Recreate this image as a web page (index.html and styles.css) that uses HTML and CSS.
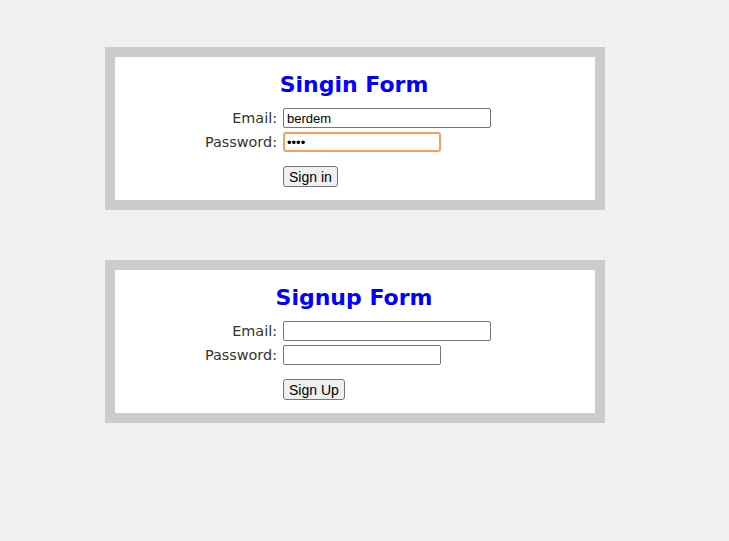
FILE: index.html
```html
<!DOCTYPE html>
<html>
<head>
<meta charset="utf-8">
<title>Forms</title>
<link rel="stylesheet" href="styles.css">
</head>
<body>
<div class="page">
  <section class="card">
    <h2 class="title">Singin Form</h2>
    <form class="form">
      <label class="label" for="e1">Email:</label>
      <input class="field field-wide" id="e1" type="text" value="berdem">
      <label class="label" for="p1">Password:</label>
      <input class="field field-short focused" id="p1" type="password" value="1234">
      <span></span>
      <div class="actions"><button class="btn" type="button">Sign in</button></div>
    </form>
  </section>
  <section class="card">
    <h2 class="title">Signup Form</h2>
    <form class="form">
      <label class="label" for="e2">Email:</label>
      <input class="field field-wide" id="e2" type="text">
      <label class="label" for="p2">Password:</label>
      <input class="field field-short" id="p2" type="password">
      <span></span>
      <div class="actions"><button class="btn" type="button">Sign Up</button></div>
    </form>
  </section>
</div>
</body>
</html>
```
FILE: styles.css
```css
html, body {
  margin: 0;
  padding: 0;
  background: #f0f0f0;
}
.page {
  display: flex;
  flex-direction: column;
  gap: 50px;
  padding: 47px 0 0 105px;
}
.card {
  width: 480px;
  background: #fff;
  border: 10px solid #cccccc;
  padding: 14px 0 13px 0;
}
.title {
  margin: 0;
  text-align: center;
  font-family: "DejaVu Sans", sans-serif;
  font-weight: bold;
  font-size: 22px;
  line-height: 28px;
  color: #0000ff;
  padding-right: 2px;
}
.form {
  margin-top: 9px;
  display: grid;
  grid-template-columns: 162px auto;
  column-gap: 6px;
  row-gap: 4px;
  align-items: center;
}
.label {
  text-align: right;
  font-family: "DejaVu Sans", sans-serif;
  font-size: 14.4px;
  color: #333;
  line-height: 20px;
}
.field {
  box-sizing: border-box;
  height: 20px;
  margin: 0;
  border: 1px solid #767676;
  border-radius: 2px;
  padding: 0 3px;
  font-family: "Liberation Sans", Arial, sans-serif;
  font-size: 13px;
  color: #000;
  background: #fff;
  outline: none;
}
.field-wide { width: 208px; }
.field-short { width: 158px; }
.focused {
  border: 2px solid #f5a05a;
  border-radius: 3px;
  padding: 0 2px;
}
.actions {
  padding-top: 10px;
}
.btn {
  box-sizing: border-box;
  height: 21px;
  margin: 0;
  padding: 0 5px;
  font-family: "Liberation Sans", Arial, sans-serif;
  font-size: 14px;
  color: #000;
  background: #efefef;
  border: 1px solid #767676;
  border-radius: 3px;
}
```
